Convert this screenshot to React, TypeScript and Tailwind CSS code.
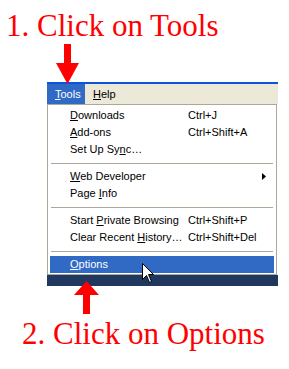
import React from "react";

type Item =
  | { kind: "sep" }
  | { kind: "item"; label: string; key: number; shortcut?: string; submenu?: boolean; active?: boolean };

const items: Item[] = [
  { kind: "item", label: "Downloads", key: 0, shortcut: "Ctrl+J" },
  { kind: "item", label: "Add-ons", key: 0, shortcut: "Ctrl+Shift+A" },
  { kind: "item", label: "Set Up Sync…", key: 9 },
  { kind: "sep" },
  { kind: "item", label: "Web Developer", key: 0, submenu: true },
  { kind: "item", label: "Page Info", key: 5 },
  { kind: "sep" },
  { kind: "item", label: "Start Private Browsing", key: 6, shortcut: "Ctrl+Shift+P" },
  { kind: "item", label: "Clear Recent History…", key: 13, shortcut: "Ctrl+Shift+Del" },
  { kind: "sep" },
  { kind: "item", label: "Options", key: 0, active: true },
];

function Accel({ label, index }: { label: string; index: number }) {
  return (
    <span>
      {label.slice(0, index)}
      <u className="underline underline-offset-[1px]">{label.charAt(index)}</u>
      {label.slice(index + 1)}
    </span>
  );
}

function MenuRow({ item }: { item: Item }) {
  if (item.kind === "sep") {
    return (
      <div className="h-[10px] flex items-center px-[1px]">
        <div className="h-px w-full bg-[#ACA899]" />
      </div>
    );
  }
  return (
    <div
      className={`flex h-[17px] items-center pl-[20px] pr-[8px] whitespace-nowrap ${
        item.active ? "bg-[#316AC5] text-white" : "text-black"
      }`}
    >
      <span className="w-[118px] shrink-0">
        <Accel label={item.label} index={item.key} />
      </span>
      {item.shortcut && <span>{item.shortcut}</span>}
      {item.submenu && (
        <svg className="ml-auto" width="4" height="7" viewBox="0 0 4 7">
          <polygon points="0,0 4,3.5 0,7" fill="#000" />
        </svg>
      )}
    </div>
  );
}

export default function App() {
  return (
    <div className="relative w-[289px] h-[369px] overflow-hidden bg-white">
      <div className="pt-[9px] pl-[6px] h-[40px] text-[31px] leading-[31px] text-[#FF0000] whitespace-nowrap">
        <span className="font-['Liberation_Serif']">1. Click on Tools</span>
      </div>

      <div className="mt-[42px] ml-[47px] w-[231px] font-['Liberation_Sans'] text-[11px] leading-[13px]">
        <div className="h-[2px] bg-[#0A55DB]" />
        <div className="flex h-[20px] items-center bg-[#ECE9D8] text-black">
          <div className="flex h-full w-[38px] items-center pl-[8px] bg-[#316AC5] text-white">
            <Accel label="Tools" index={0} />
          </div>
          <div className="pl-[8px]">
            <Accel label="Help" index={0} />
          </div>
        </div>
        <div className="w-[230px] border border-[#ACA899] bg-white px-[2px] pt-[2px] pb-[1px]">
          {items.map((it, i) => (
            <MenuRow key={i} item={it} />
          ))}
        </div>
        <div className="h-[11px] bg-[#20385F]" />
      </div>

      <div className="mt-[31px] pl-[22px] h-[31px] text-[31px] leading-[31px] text-[#FF0000] whitespace-nowrap">
        <span className="font-['Liberation_Serif']">2. Click on Options</span>
      </div>

      {/* arrows and cursor drawn over the screenshot */}
      <svg className="absolute left-0 top-0 pointer-events-none" width="289" height="369" viewBox="0 0 289 369">
        <rect x="64" y="44" width="7" height="20" fill="#FF0000" />
        <polygon points="56,63 79,63 67.5,84" fill="#FF0000" />
        <polygon points="74,295 99,295 86.5,281" fill="#FF0000" />
        <rect x="83" y="294" width="7" height="20" fill="#FF0000" />
        <path
          d="M142.5 263.5 L142.5 279.5 L146.5 275.5 L149.5 282.5 L151.5 281.5 L148.5 274.5 L153.5 274.5 Z"
          fill="#fff"
          stroke="#000"
          strokeWidth="1"
        />
      </svg>
    </div>
  );
}
